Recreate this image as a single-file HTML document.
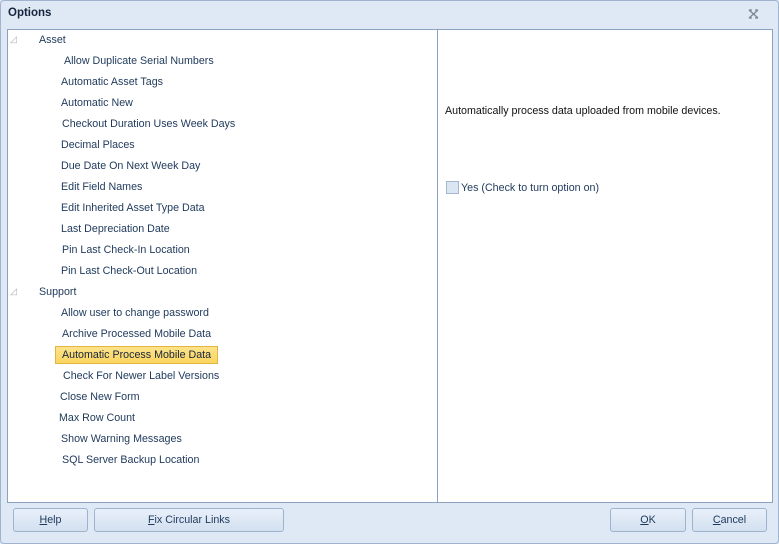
<!DOCTYPE html><html><head><style>
body{margin:0;width:779px;height:544px;background:#dae6f4;font-family:"Liberation Sans",sans-serif;font-size:10.7px;color:#1e395b;position:relative;overflow:hidden}
.win{position:absolute;left:0;top:0;width:777px;height:542px;border:1px solid #a0b4cf;border-radius:4px;background:#dfe9f5}
.t{position:absolute;white-space:nowrap}
.panel{position:absolute;left:7px;top:29px;width:764px;height:472px;background:#fff;border:1px solid #8da2bf}
.div{position:absolute;left:437px;top:29px;width:1px;height:473px;background:#8da2bf}
.btn{position:absolute;top:508px;height:22px;border:1px solid #9fb3cf;border-radius:3px;background:linear-gradient(#e8f0fa,#d3e0f0);text-align:center;line-height:22px;color:#1e395b}
.tri{position:absolute;color:#b0b0b0;font-size:9px}
</style></head><body><div class="win"></div>
<div class="t" style="left:8px;top:7px;font-weight:bold;font-size:11.5px;color:#15253d">Options</div>
<svg style="position:absolute;left:748px;top:9px" width="11" height="10" viewBox="0 0 11 10"><path d="M1 1L10 9M10 1L1 9M1 1h3M7 1h3M1 9h3M7 9h3" stroke="#7a8596" stroke-width="1.3" fill="none"/></svg>
<div class="panel"></div><div class="div"></div>
<div class="tri" style="left:10px;top:34px">◿</div>
<div class="tri" style="left:10px;top:286px">◿</div>
<div class="t" style="left:39px;top:34px">Asset</div>
<div class="t" style="left:64px;top:55px">Allow Duplicate Serial Numbers</div>
<div class="t" style="left:61px;top:76px">Automatic Asset Tags</div>
<div class="t" style="left:61px;top:97px">Automatic New</div>
<div class="t" style="left:62px;top:118px">Checkout Duration Uses Week Days</div>
<div class="t" style="left:61px;top:139px">Decimal Places</div>
<div class="t" style="left:61px;top:160px">Due Date On Next Week Day</div>
<div class="t" style="left:61px;top:181px">Edit Field Names</div>
<div class="t" style="left:61px;top:202px">Edit Inherited Asset Type Data</div>
<div class="t" style="left:61px;top:223px">Last Depreciation Date</div>
<div class="t" style="left:62px;top:244px">Pin Last Check-In Location</div>
<div class="t" style="left:61px;top:265px">Pin Last Check-Out Location</div>
<div class="t" style="left:39px;top:286px">Support</div>
<div class="t" style="left:61px;top:307px">Allow user to change password</div>
<div class="t" style="left:62px;top:328px">Archive Processed Mobile Data</div>
<div class="t" style="left:55px;top:346px;width:155px;height:16px;border:1px solid #e3b43f;background:linear-gradient(#fde38a,#fbd560);padding-left:6px;line-height:16px;color:#15253d">Automatic Process Mobile Data</div>
<div class="t" style="left:63px;top:370px">Check For Newer Label Versions</div>
<div class="t" style="left:60px;top:391px">Close New Form</div>
<div class="t" style="left:59px;top:412px">Max Row Count</div>
<div class="t" style="left:61px;top:433px">Show Warning Messages</div>
<div class="t" style="left:62px;top:454px">SQL Server Backup Location</div>
<div class="t" style="left:445px;top:105px;color:#111">Automatically process data uploaded from mobile devices.</div>
<div class="t" style="left:446px;top:181px;width:11px;height:11px;border:1px solid #a5b7cf;background:#dbe6f3"></div>
<div class="t" style="left:461px;top:182px">Yes (Check to turn option on)</div>
<div class="btn" style="left:13px;width:73px"><u>H</u>elp</div>
<div class="btn" style="left:94px;width:188px"><u>F</u>ix Circular Links</div>
<div class="btn" style="left:610px;width:74px"><u>O</u>K</div>
<div class="btn" style="left:692px;width:73px"><u>C</u>ancel</div>
</body></html>
